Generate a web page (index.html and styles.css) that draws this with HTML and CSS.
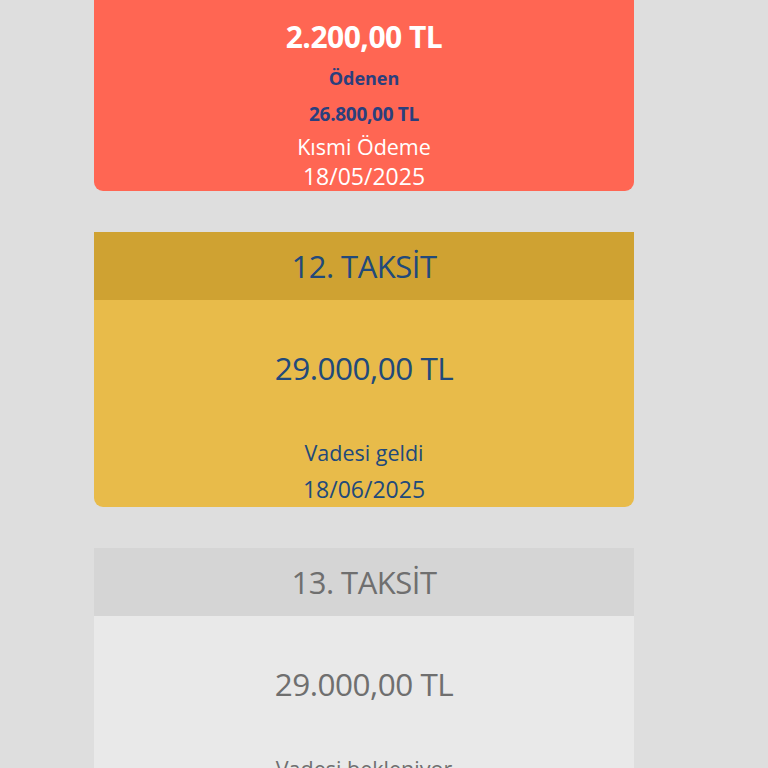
FILE: index.html
```html
<!DOCTYPE html>
<html lang="tr">
<head>
<meta charset="utf-8">
<link rel="stylesheet" href="styles.css">
</head>
<body>
<div class="list">
  <div class="card card-red">
    <div class="card-body body-red">
      <div class="amount-bold">2.200,00 TL</div>
      <div class="paid-label">Ödenen</div>
      <div class="paid-value">26.800,00 TL</div>
      <div class="status-red">Kısmi Ödeme</div>
      <div class="date-red">18/05/2025</div>
    </div>
  </div>
  <div class="card card-yellow">
    <div class="card-head">12. TAKSİT</div>
    <div class="card-body body-std">
      <div class="amount">29.000,00 TL</div>
      <div class="status">Vadesi geldi</div>
      <div class="date">18/06/2025</div>
    </div>
  </div>
  <div class="card card-gray">
    <div class="card-head">13. TAKSİT</div>
    <div class="card-body body-std">
      <div class="amount">29.000,00 TL</div>
      <div class="status">Vadesi bekleniyor</div>
      <div class="date">18/07/2025</div>
    </div>
  </div>
</div>
</body>
</html>
```
FILE: styles.css
```css
html, body {
  margin: 0;
  padding: 0;
  background: #dedede;
  font-family: "Open Sans", "Noto Sans", sans-serif;
  height: 768px;
  overflow: hidden;
}
.list {
  display: flex;
  flex-direction: column;
  gap: 41px;
  padding-left: 94px;
  width: 540px;
}
.card {
  border-radius: 0 0 9px 9px;
  overflow: hidden;
  text-align: center;
}
.card-red { background: #ff6653; color: #ffffff; }
.card-yellow { background: #e8bb4a; color: #21497b; }
.card-yellow .card-head { background: #cfa232; }
.card-gray { background: #e9e9e9; color: #6f6f6f; }
.card-gray .card-head { background: #d5d5d5; }
.card-head {
  height: 68px;
  line-height: 68px;
  font-size: 31px;
  letter-spacing: -0.5px;
}
.body-red {
  padding-top: 14px;
}
.amount-bold {
  font-size: 30px;
  font-weight: 700;
  line-height: 46px;
  letter-spacing: -0.5px;
}
.paid-label, .paid-value {
  color: #2a3f7d;
  font-weight: 700;
  font-size: 18px;
  line-height: 36px;
}
.paid-value { font-size: 19px; letter-spacing: -0.3px; }
.status-red, .date-red {
  font-size: 21.5px;
  line-height: 30px;
}
.date-red { font-size: 23px; line-height: 29px; }
.body-std {
  padding-top: 48px;
}
.amount {
  font-size: 31.5px;
  line-height: 40px;
  letter-spacing: -0.5px;
}
.status {
  margin-top: 47px;
  font-size: 21.5px;
  line-height: 36px;
}
.date {
  margin-top: 1px;
  font-size: 23px;
  line-height: 35px;
}
```
